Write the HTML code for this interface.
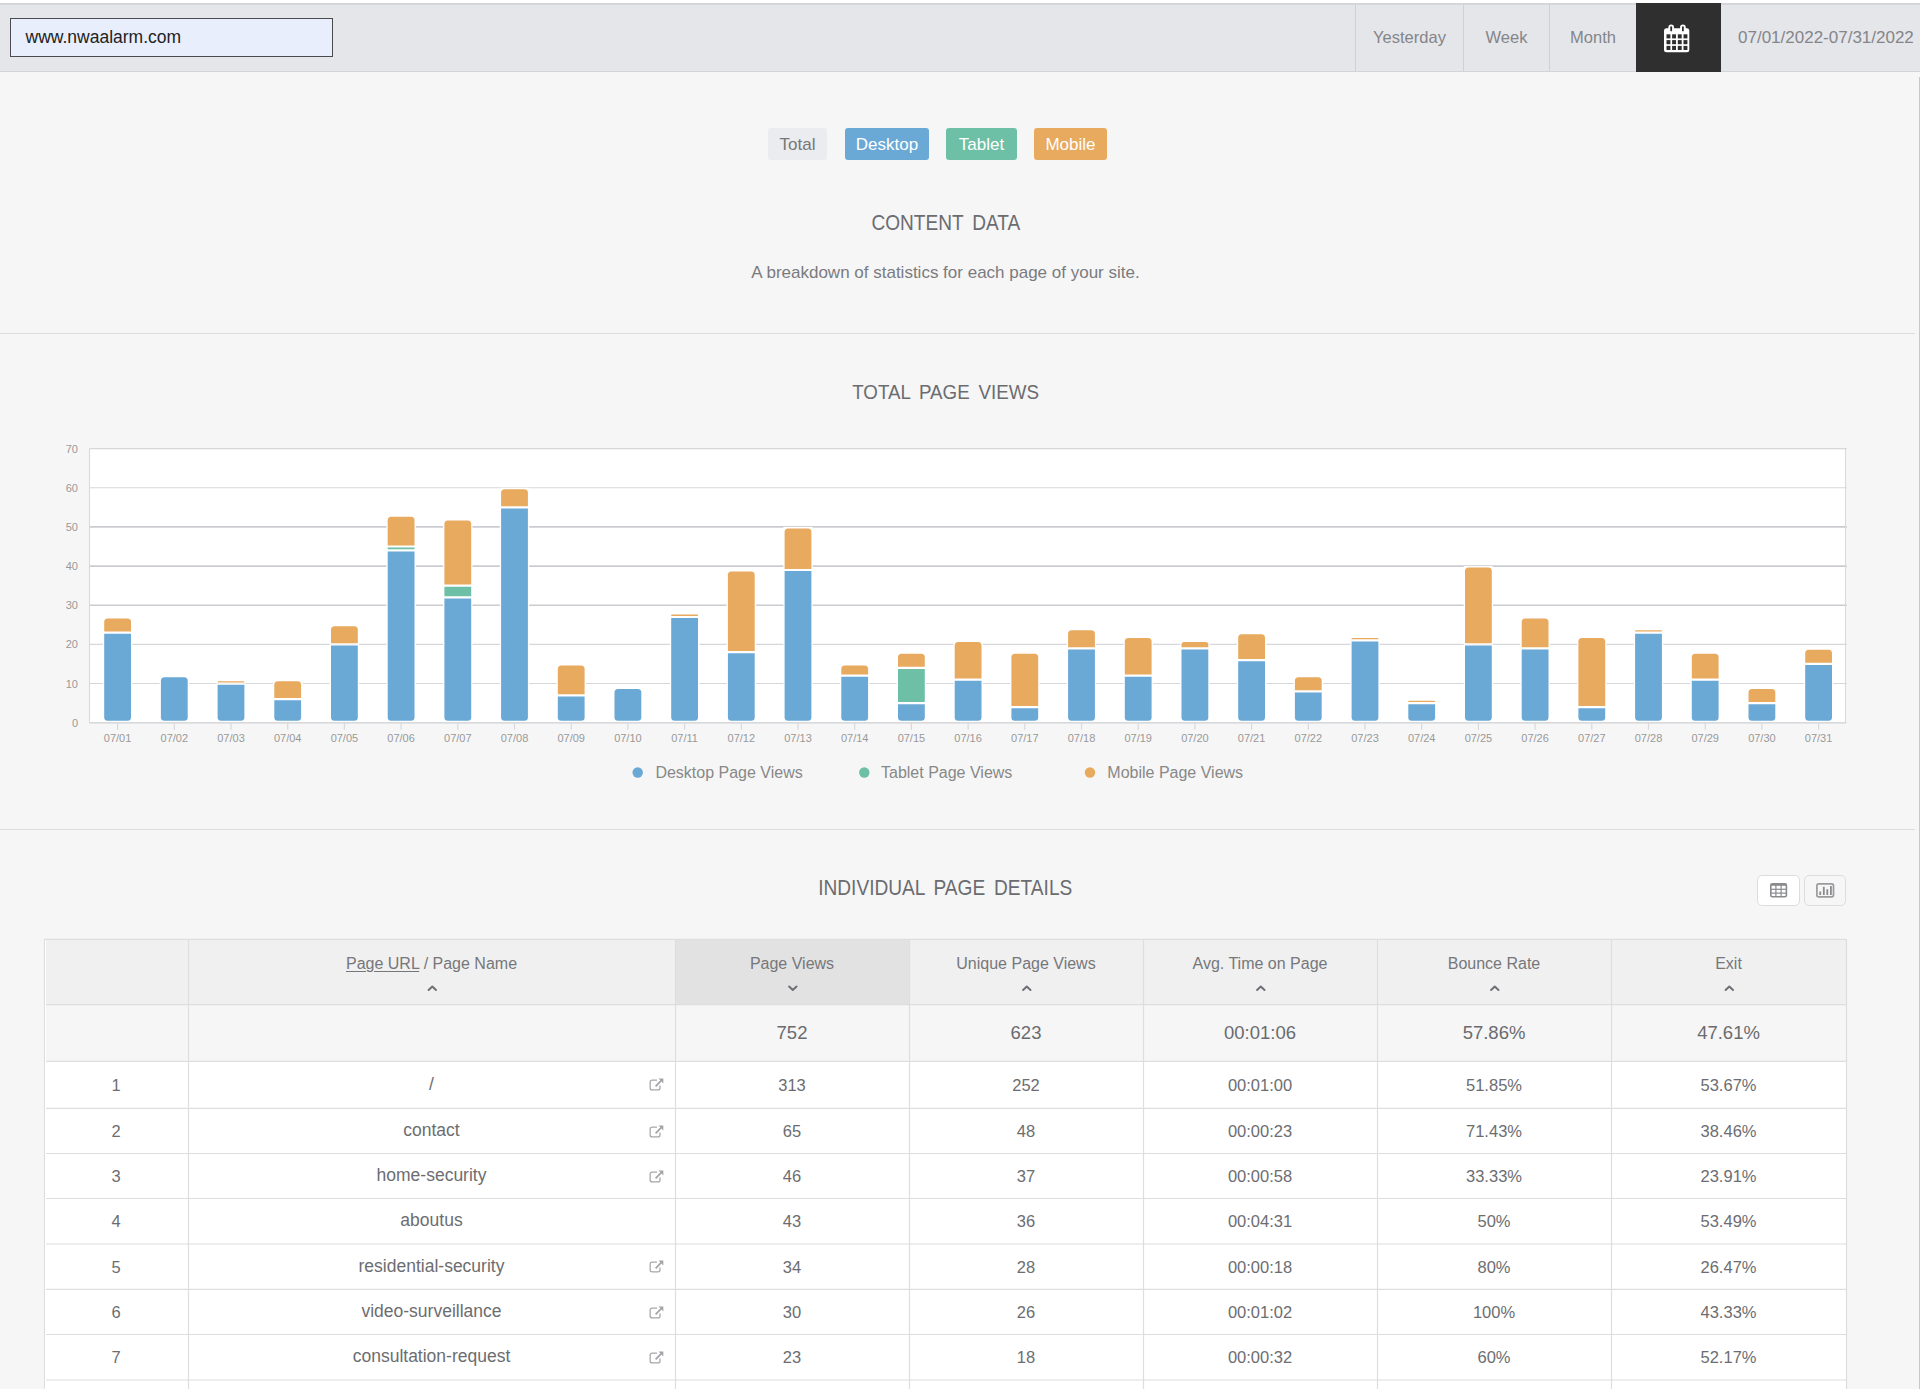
<!DOCTYPE html>
<html><head><meta charset="utf-8">
<style>
html,body{margin:0;padding:0}
body{width:1920px;height:1389px;overflow:hidden;position:relative;background:#f6f6f6;font-family:"Liberation Sans", sans-serif}
.a{position:absolute;white-space:nowrap;line-height:1}
.c{position:absolute;white-space:nowrap;line-height:1.2;text-align:center}
.btn{position:absolute;top:128px;height:32px;border-radius:3px;color:#fff;font-size:17px;line-height:34px;text-align:center}
</style></head><body>
<div style="position:absolute;left:0;top:0;width:1920px;height:3px;background:#fff"></div>
<div style="position:absolute;left:0;top:3px;width:1920px;height:69px;background:#e5e6ea;box-sizing:border-box;border-top:2px solid #d5d6da;border-bottom:1px solid #d3d4d8"></div>
<div style="position:absolute;left:10px;top:18px;width:323px;height:39px;box-sizing:border-box;border:1px solid #4a4b4f;background:#e8eefb"></div>
<div class="a" style="left:25.5px;top:29px;font-size:17.5px;color:#222">www.nwaalarm.com</div>
<div style="position:absolute;left:1355px;top:4px;width:1px;height:67px;background:#cfd0d4"></div>
<div style="position:absolute;left:1463px;top:4px;width:1px;height:67px;background:#cfd0d4"></div>
<div style="position:absolute;left:1549px;top:4px;width:1px;height:67px;background:#cfd0d4"></div>
<div class="c" style="left:1356px;width:107px;top:28px;font-size:16.5px;color:#848589">Yesterday</div>
<div class="c" style="left:1464px;width:85px;top:28px;font-size:16.5px;color:#848589">Week</div>
<div class="c" style="left:1550px;width:86px;top:28px;font-size:16.5px;color:#848589">Month</div>
<div style="position:absolute;left:1635.6px;top:3px;width:85px;height:69px;background:#2f2f2f"></div>
<svg width="26" height="29" viewBox="0 0 26 29" style="position:absolute;left:1663.6px;top:23.8px"><path d="M2.5,4.3 H22.8 Q25.3,4.3 25.3,6.8 V25.7 Q25.3,28.2 22.8,28.2 H2.5 Q0,28.2 0,25.7 V6.8 Q0,4.3 2.5,4.3 Z" fill="#fff"/><rect x="4.4" y="0.5" width="5.6" height="8" rx="2.8" fill="#fff"/><rect x="16.1" y="0.5" width="5.6" height="8" rx="2.8" fill="#fff"/><rect x="6.3" y="2.3" width="1.8" height="5" rx="0.9" fill="#2f2f2f"/><rect x="18" y="2.3" width="1.8" height="5" rx="0.9" fill="#2f2f2f"/><rect x="2.5" y="10.3" width="3.9" height="4.1" fill="#2f2f2f"/><rect x="8.1" y="10.3" width="3.9" height="4.1" fill="#2f2f2f"/><rect x="13.8" y="10.3" width="3.9" height="4.1" fill="#2f2f2f"/><rect x="19.5" y="10.3" width="3.9" height="4.1" fill="#2f2f2f"/><rect x="2.5" y="16.1" width="3.9" height="4.1" fill="#2f2f2f"/><rect x="8.1" y="16.1" width="3.9" height="4.1" fill="#2f2f2f"/><rect x="13.8" y="16.1" width="3.9" height="4.1" fill="#2f2f2f"/><rect x="19.5" y="16.1" width="3.9" height="4.1" fill="#2f2f2f"/><rect x="2.5" y="21.9" width="3.9" height="4.1" fill="#2f2f2f"/><rect x="8.1" y="21.9" width="3.9" height="4.1" fill="#2f2f2f"/><rect x="13.8" y="21.9" width="3.9" height="4.1" fill="#2f2f2f"/><rect x="19.5" y="21.9" width="3.9" height="4.1" fill="#2f2f2f"/></svg>
<div class="a" style="left:1738px;top:29px;font-size:17px;color:#848589">07/01/2022-07/31/2022</div>
<div style="position:absolute;left:1919px;top:77px;width:1px;height:1312px;background:#c8c8c8"></div>

<div class="btn" style="left:768px;width:59px;background:#ebecf0;color:#777">Total</div>
<div class="btn" style="left:845px;width:84px;background:#6aa8d6">Desktop</div>
<div class="btn" style="left:946px;width:71px;background:#6dc0a6">Tablet</div>
<div class="btn" style="left:1034px;width:73px;background:#e8aa5e">Mobile</div>

<div class="c" style="left:0;width:1891px;top:211px;font-size:21.5px;color:#6b6c70;word-spacing:4px"><span style="display:inline-block;transform:scaleX(0.887)">CONTENT DATA</span></div>
<div class="c" style="left:0;width:1891px;top:263px;font-size:17px;color:#7a7b7f">A breakdown of statistics for each page of your site.</div>
<div style="position:absolute;left:0;top:333px;width:1915px;height:1px;background:#dcdde1"></div>

<div class="c" style="left:0;width:1891px;top:379px;font-size:21px;color:#6b6c70;word-spacing:4px"><span style="display:inline-block;transform:scaleX(0.893)">TOTAL PAGE VIEWS</span></div>
<svg width="1920" height="1389" style="position:absolute;left:0;top:0">
<rect x="89.5" y="448.6" width="1756.0" height="274.1" fill="#fff"/>
<line x1="89.5" y1="722.70" x2="1846.8" y2="722.70" stroke="#d6d7db" stroke-width="1.1"/>
<line x1="89.5" y1="683.54" x2="1846.8" y2="683.54" stroke="#d6d7db" stroke-width="1.1"/>
<line x1="89.5" y1="644.39" x2="1846.8" y2="644.39" stroke="#d6d7db" stroke-width="1.1"/>
<line x1="89.5" y1="605.23" x2="1846.8" y2="605.23" stroke="#cbccd0" stroke-width="1.7"/>
<line x1="89.5" y1="566.07" x2="1846.8" y2="566.07" stroke="#cbccd0" stroke-width="1.7"/>
<line x1="89.5" y1="526.91" x2="1846.8" y2="526.91" stroke="#cbccd0" stroke-width="1.7"/>
<line x1="89.5" y1="487.76" x2="1846.8" y2="487.76" stroke="#d6d7db" stroke-width="1.1"/>
<line x1="89.5" y1="448.60" x2="1846.8" y2="448.60" stroke="#d6d7db" stroke-width="1.1"/>
<line x1="89.5" y1="448.6" x2="89.5" y2="722.7" stroke="#d9dadf" stroke-width="1.1"/>
<line x1="1845.5" y1="448.6" x2="1845.5" y2="722.7" stroke="#d9dadf" stroke-width="1.1"/>
<text x="78" y="726.70" text-anchor="end" font-family='"Liberation Sans", sans-serif' font-size="11" fill="#999">0</text>
<text x="78" y="687.54" text-anchor="end" font-family='"Liberation Sans", sans-serif' font-size="11" fill="#999">10</text>
<text x="78" y="648.39" text-anchor="end" font-family='"Liberation Sans", sans-serif' font-size="11" fill="#999">20</text>
<text x="78" y="609.23" text-anchor="end" font-family='"Liberation Sans", sans-serif' font-size="11" fill="#999">30</text>
<text x="78" y="570.07" text-anchor="end" font-family='"Liberation Sans", sans-serif' font-size="11" fill="#999">40</text>
<text x="78" y="530.91" text-anchor="end" font-family='"Liberation Sans", sans-serif' font-size="11" fill="#999">50</text>
<text x="78" y="491.76" text-anchor="end" font-family='"Liberation Sans", sans-serif' font-size="11" fill="#999">60</text>
<text x="78" y="452.60" text-anchor="end" font-family='"Liberation Sans", sans-serif' font-size="11" fill="#999">70</text>
<line x1="117.60" y1="722.7" x2="117.60" y2="729.7" stroke="#d8d9dd" stroke-width="1.2"/>
<text x="117.60" y="741.70" text-anchor="middle" font-family='"Liberation Sans", sans-serif' font-size="11" fill="#999">07/01</text>
<rect x="102.90" y="632.64" width="29.4" height="90.06" fill="#fff"/>
<path d="M104.20,633.74 H131.00 Q131.00,633.74 131.00,633.74 V717.30 Q131.00,720.80 127.50,720.80 H107.70 Q104.20,720.80 104.20,717.30 V633.74 Q104.20,633.74 104.20,633.74 Z" fill="#6aa8d6"/>
<rect x="102.90" y="616.98" width="29.4" height="15.66" fill="#fff"/>
<path d="M107.70,618.48 H127.50 Q131.00,618.48 131.00,621.98 V631.54 Q131.00,631.54 131.00,631.54 H104.20 Q104.20,631.54 104.20,631.54 V621.98 Q104.20,618.48 107.70,618.48 Z" fill="#e8aa5e"/>
<line x1="174.30" y1="722.7" x2="174.30" y2="729.7" stroke="#d8d9dd" stroke-width="1.2"/>
<text x="174.30" y="741.70" text-anchor="middle" font-family='"Liberation Sans", sans-serif' font-size="11" fill="#999">07/02</text>
<rect x="159.60" y="675.71" width="29.4" height="46.99" fill="#fff"/>
<path d="M164.40,677.21 H184.20 Q187.70,677.21 187.70,680.71 V717.30 Q187.70,720.80 184.20,720.80 H164.40 Q160.90,720.80 160.90,717.30 V680.71 Q160.90,677.21 164.40,677.21 Z" fill="#6aa8d6"/>
<line x1="231.00" y1="722.7" x2="231.00" y2="729.7" stroke="#d8d9dd" stroke-width="1.2"/>
<text x="231.00" y="741.70" text-anchor="middle" font-family='"Liberation Sans", sans-serif' font-size="11" fill="#999">07/03</text>
<rect x="216.30" y="683.54" width="29.4" height="39.16" fill="#fff"/>
<path d="M217.60,684.64 H244.40 Q244.40,684.64 244.40,684.64 V717.30 Q244.40,720.80 240.90,720.80 H221.10 Q217.60,720.80 217.60,717.30 V684.64 Q217.60,684.64 217.60,684.64 Z" fill="#6aa8d6"/>
<rect x="216.30" y="679.63" width="29.4" height="3.92" fill="#fff"/>
<path d="M218.26,681.13 H243.74 Q244.40,681.13 244.40,681.79 V682.44 Q244.40,682.44 244.40,682.44 H217.60 Q217.60,682.44 217.60,682.44 V681.79 Q217.60,681.13 218.26,681.13 Z" fill="#e8aa5e"/>
<line x1="287.70" y1="722.7" x2="287.70" y2="729.7" stroke="#d8d9dd" stroke-width="1.2"/>
<text x="287.70" y="741.70" text-anchor="middle" font-family='"Liberation Sans", sans-serif' font-size="11" fill="#999">07/04</text>
<rect x="273.00" y="699.21" width="29.4" height="23.49" fill="#fff"/>
<path d="M274.30,700.31 H301.10 Q301.10,700.31 301.10,700.31 V717.30 Q301.10,720.80 297.60,720.80 H277.80 Q274.30,720.80 274.30,717.30 V700.31 Q274.30,700.31 274.30,700.31 Z" fill="#6aa8d6"/>
<rect x="273.00" y="679.63" width="29.4" height="19.58" fill="#fff"/>
<path d="M277.80,681.13 H297.60 Q301.10,681.13 301.10,684.63 V698.11 Q301.10,698.11 301.10,698.11 H274.30 Q274.30,698.11 274.30,698.11 V684.63 Q274.30,681.13 277.80,681.13 Z" fill="#e8aa5e"/>
<line x1="344.40" y1="722.7" x2="344.40" y2="729.7" stroke="#d8d9dd" stroke-width="1.2"/>
<text x="344.40" y="741.70" text-anchor="middle" font-family='"Liberation Sans", sans-serif' font-size="11" fill="#999">07/05</text>
<rect x="329.70" y="644.39" width="29.4" height="78.31" fill="#fff"/>
<path d="M331.00,645.49 H357.80 Q357.80,645.49 357.80,645.49 V717.30 Q357.80,720.80 354.30,720.80 H334.50 Q331.00,720.80 331.00,717.30 V645.49 Q331.00,645.49 331.00,645.49 Z" fill="#6aa8d6"/>
<rect x="329.70" y="624.81" width="29.4" height="19.58" fill="#fff"/>
<path d="M334.50,626.31 H354.30 Q357.80,626.31 357.80,629.81 V643.29 Q357.80,643.29 357.80,643.29 H331.00 Q331.00,643.29 331.00,643.29 V629.81 Q331.00,626.31 334.50,626.31 Z" fill="#e8aa5e"/>
<line x1="401.10" y1="722.7" x2="401.10" y2="729.7" stroke="#d8d9dd" stroke-width="1.2"/>
<text x="401.10" y="741.70" text-anchor="middle" font-family='"Liberation Sans", sans-serif' font-size="11" fill="#999">07/06</text>
<rect x="386.40" y="550.41" width="29.4" height="172.29" fill="#fff"/>
<path d="M387.70,551.51 H414.50 Q414.50,551.51 414.50,551.51 V717.30 Q414.50,720.80 411.00,720.80 H391.20 Q387.70,720.80 387.70,717.30 V551.51 Q387.70,551.51 387.70,551.51 Z" fill="#6aa8d6"/>
<rect x="386.40" y="546.49" width="29.4" height="3.92" fill="#fff"/>
<path d="M387.70,547.59 H414.50 Q414.50,547.59 414.50,547.59 V549.31 Q414.50,549.31 414.50,549.31 H387.70 Q387.70,549.31 387.70,549.31 V547.59 Q387.70,547.59 387.70,547.59 Z" fill="#6dc0a6"/>
<rect x="386.40" y="515.17" width="29.4" height="31.33" fill="#fff"/>
<path d="M391.20,516.67 H411.00 Q414.50,516.67 414.50,520.17 V545.39 Q414.50,545.39 414.50,545.39 H387.70 Q387.70,545.39 387.70,545.39 V520.17 Q387.70,516.67 391.20,516.67 Z" fill="#e8aa5e"/>
<line x1="457.80" y1="722.7" x2="457.80" y2="729.7" stroke="#d8d9dd" stroke-width="1.2"/>
<text x="457.80" y="741.70" text-anchor="middle" font-family='"Liberation Sans", sans-serif' font-size="11" fill="#999">07/07</text>
<rect x="443.10" y="597.40" width="29.4" height="125.30" fill="#fff"/>
<path d="M444.40,598.50 H471.20 Q471.20,598.50 471.20,598.50 V717.30 Q471.20,720.80 467.70,720.80 H447.90 Q444.40,720.80 444.40,717.30 V598.50 Q444.40,598.50 444.40,598.50 Z" fill="#6aa8d6"/>
<rect x="443.10" y="585.65" width="29.4" height="11.75" fill="#fff"/>
<path d="M444.40,586.75 H471.20 Q471.20,586.75 471.20,586.75 V596.30 Q471.20,596.30 471.20,596.30 H444.40 Q444.40,596.30 444.40,596.30 V586.75 Q444.40,586.75 444.40,586.75 Z" fill="#6dc0a6"/>
<rect x="443.10" y="519.08" width="29.4" height="66.57" fill="#fff"/>
<path d="M447.90,520.58 H467.70 Q471.20,520.58 471.20,524.08 V584.55 Q471.20,584.55 471.20,584.55 H444.40 Q444.40,584.55 444.40,584.55 V524.08 Q444.40,520.58 447.90,520.58 Z" fill="#e8aa5e"/>
<line x1="514.50" y1="722.7" x2="514.50" y2="729.7" stroke="#d8d9dd" stroke-width="1.2"/>
<text x="514.50" y="741.70" text-anchor="middle" font-family='"Liberation Sans", sans-serif' font-size="11" fill="#999">07/08</text>
<rect x="499.80" y="507.34" width="29.4" height="215.36" fill="#fff"/>
<path d="M501.10,508.44 H527.90 Q527.90,508.44 527.90,508.44 V717.30 Q527.90,720.80 524.40,720.80 H504.60 Q501.10,720.80 501.10,717.30 V508.44 Q501.10,508.44 501.10,508.44 Z" fill="#6aa8d6"/>
<rect x="499.80" y="487.76" width="29.4" height="19.58" fill="#fff"/>
<path d="M504.60,489.26 H524.40 Q527.90,489.26 527.90,492.76 V506.24 Q527.90,506.24 527.90,506.24 H501.10 Q501.10,506.24 501.10,506.24 V492.76 Q501.10,489.26 504.60,489.26 Z" fill="#e8aa5e"/>
<line x1="571.20" y1="722.7" x2="571.20" y2="729.7" stroke="#d8d9dd" stroke-width="1.2"/>
<text x="571.20" y="741.70" text-anchor="middle" font-family='"Liberation Sans", sans-serif' font-size="11" fill="#999">07/09</text>
<rect x="556.50" y="695.29" width="29.4" height="27.41" fill="#fff"/>
<path d="M557.80,696.39 H584.60 Q584.60,696.39 584.60,696.39 V717.30 Q584.60,720.80 581.10,720.80 H561.30 Q557.80,720.80 557.80,717.30 V696.39 Q557.80,696.39 557.80,696.39 Z" fill="#6aa8d6"/>
<rect x="556.50" y="663.96" width="29.4" height="31.33" fill="#fff"/>
<path d="M561.30,665.46 H581.10 Q584.60,665.46 584.60,668.96 V694.19 Q584.60,694.19 584.60,694.19 H557.80 Q557.80,694.19 557.80,694.19 V668.96 Q557.80,665.46 561.30,665.46 Z" fill="#e8aa5e"/>
<line x1="627.90" y1="722.7" x2="627.90" y2="729.7" stroke="#d8d9dd" stroke-width="1.2"/>
<text x="627.90" y="741.70" text-anchor="middle" font-family='"Liberation Sans", sans-serif' font-size="11" fill="#999">07/10</text>
<rect x="613.20" y="687.46" width="29.4" height="35.24" fill="#fff"/>
<path d="M618.00,688.96 H637.80 Q641.30,688.96 641.30,692.46 V717.30 Q641.30,720.80 637.80,720.80 H618.00 Q614.50,720.80 614.50,717.30 V692.46 Q614.50,688.96 618.00,688.96 Z" fill="#6aa8d6"/>
<line x1="684.60" y1="722.7" x2="684.60" y2="729.7" stroke="#d8d9dd" stroke-width="1.2"/>
<text x="684.60" y="741.70" text-anchor="middle" font-family='"Liberation Sans", sans-serif' font-size="11" fill="#999">07/11</text>
<rect x="669.90" y="616.98" width="29.4" height="105.72" fill="#fff"/>
<path d="M671.20,618.08 H698.00 Q698.00,618.08 698.00,618.08 V717.30 Q698.00,720.80 694.50,720.80 H674.70 Q671.20,720.80 671.20,717.30 V618.08 Q671.20,618.08 671.20,618.08 Z" fill="#6aa8d6"/>
<rect x="669.90" y="613.06" width="29.4" height="3.92" fill="#fff"/>
<path d="M671.86,614.56 H697.34 Q698.00,614.56 698.00,615.22 V615.88 Q698.00,615.88 698.00,615.88 H671.20 Q671.20,615.88 671.20,615.88 V615.22 Q671.20,614.56 671.86,614.56 Z" fill="#e8aa5e"/>
<line x1="741.30" y1="722.7" x2="741.30" y2="729.7" stroke="#d8d9dd" stroke-width="1.2"/>
<text x="741.30" y="741.70" text-anchor="middle" font-family='"Liberation Sans", sans-serif' font-size="11" fill="#999">07/12</text>
<rect x="726.60" y="652.22" width="29.4" height="70.48" fill="#fff"/>
<path d="M727.90,653.32 H754.70 Q754.70,653.32 754.70,653.32 V717.30 Q754.70,720.80 751.20,720.80 H731.40 Q727.90,720.80 727.90,717.30 V653.32 Q727.90,653.32 727.90,653.32 Z" fill="#6aa8d6"/>
<rect x="726.60" y="569.99" width="29.4" height="82.23" fill="#fff"/>
<path d="M731.40,571.49 H751.20 Q754.70,571.49 754.70,574.99 V651.12 Q754.70,651.12 754.70,651.12 H727.90 Q727.90,651.12 727.90,651.12 V574.99 Q727.90,571.49 731.40,571.49 Z" fill="#e8aa5e"/>
<line x1="798.00" y1="722.7" x2="798.00" y2="729.7" stroke="#d8d9dd" stroke-width="1.2"/>
<text x="798.00" y="741.70" text-anchor="middle" font-family='"Liberation Sans", sans-serif' font-size="11" fill="#999">07/13</text>
<rect x="783.30" y="569.99" width="29.4" height="152.71" fill="#fff"/>
<path d="M784.60,571.09 H811.40 Q811.40,571.09 811.40,571.09 V717.30 Q811.40,720.80 807.90,720.80 H788.10 Q784.60,720.80 784.60,717.30 V571.09 Q784.60,571.09 784.60,571.09 Z" fill="#6aa8d6"/>
<rect x="783.30" y="526.91" width="29.4" height="43.07" fill="#fff"/>
<path d="M788.10,528.41 H807.90 Q811.40,528.41 811.40,531.91 V568.89 Q811.40,568.89 811.40,568.89 H784.60 Q784.60,568.89 784.60,568.89 V531.91 Q784.60,528.41 788.10,528.41 Z" fill="#e8aa5e"/>
<line x1="854.70" y1="722.7" x2="854.70" y2="729.7" stroke="#d8d9dd" stroke-width="1.2"/>
<text x="854.70" y="741.70" text-anchor="middle" font-family='"Liberation Sans", sans-serif' font-size="11" fill="#999">07/14</text>
<rect x="840.00" y="675.71" width="29.4" height="46.99" fill="#fff"/>
<path d="M841.30,676.81 H868.10 Q868.10,676.81 868.10,676.81 V717.30 Q868.10,720.80 864.60,720.80 H844.80 Q841.30,720.80 841.30,717.30 V676.81 Q841.30,676.81 841.30,676.81 Z" fill="#6aa8d6"/>
<rect x="840.00" y="663.96" width="29.4" height="11.75" fill="#fff"/>
<path d="M844.80,665.46 H864.60 Q868.10,665.46 868.10,668.96 V674.61 Q868.10,674.61 868.10,674.61 H841.30 Q841.30,674.61 841.30,674.61 V668.96 Q841.30,665.46 844.80,665.46 Z" fill="#e8aa5e"/>
<line x1="911.40" y1="722.7" x2="911.40" y2="729.7" stroke="#d8d9dd" stroke-width="1.2"/>
<text x="911.40" y="741.70" text-anchor="middle" font-family='"Liberation Sans", sans-serif' font-size="11" fill="#999">07/15</text>
<rect x="896.70" y="703.12" width="29.4" height="19.58" fill="#fff"/>
<path d="M898.00,704.22 H924.80 Q924.80,704.22 924.80,704.22 V717.30 Q924.80,720.80 921.30,720.80 H901.50 Q898.00,720.80 898.00,717.30 V704.22 Q898.00,704.22 898.00,704.22 Z" fill="#6aa8d6"/>
<rect x="896.70" y="667.88" width="29.4" height="35.24" fill="#fff"/>
<path d="M898.00,668.98 H924.80 Q924.80,668.98 924.80,668.98 V702.02 Q924.80,702.02 924.80,702.02 H898.00 Q898.00,702.02 898.00,702.02 V668.98 Q898.00,668.98 898.00,668.98 Z" fill="#6dc0a6"/>
<rect x="896.70" y="652.22" width="29.4" height="15.66" fill="#fff"/>
<path d="M901.50,653.72 H921.30 Q924.80,653.72 924.80,657.22 V666.78 Q924.80,666.78 924.80,666.78 H898.00 Q898.00,666.78 898.00,666.78 V657.22 Q898.00,653.72 901.50,653.72 Z" fill="#e8aa5e"/>
<line x1="968.10" y1="722.7" x2="968.10" y2="729.7" stroke="#d8d9dd" stroke-width="1.2"/>
<text x="968.10" y="741.70" text-anchor="middle" font-family='"Liberation Sans", sans-serif' font-size="11" fill="#999">07/16</text>
<rect x="953.40" y="679.63" width="29.4" height="43.07" fill="#fff"/>
<path d="M954.70,680.73 H981.50 Q981.50,680.73 981.50,680.73 V717.30 Q981.50,720.80 978.00,720.80 H958.20 Q954.70,720.80 954.70,717.30 V680.73 Q954.70,680.73 954.70,680.73 Z" fill="#6aa8d6"/>
<rect x="953.40" y="640.47" width="29.4" height="39.16" fill="#fff"/>
<path d="M958.20,641.97 H978.00 Q981.50,641.97 981.50,645.47 V678.53 Q981.50,678.53 981.50,678.53 H954.70 Q954.70,678.53 954.70,678.53 V645.47 Q954.70,641.97 958.20,641.97 Z" fill="#e8aa5e"/>
<line x1="1024.80" y1="722.7" x2="1024.80" y2="729.7" stroke="#d8d9dd" stroke-width="1.2"/>
<text x="1024.80" y="741.70" text-anchor="middle" font-family='"Liberation Sans", sans-serif' font-size="11" fill="#999">07/17</text>
<rect x="1010.10" y="707.04" width="29.4" height="15.66" fill="#fff"/>
<path d="M1011.40,708.14 H1038.20 Q1038.20,708.14 1038.20,708.14 V717.30 Q1038.20,720.80 1034.70,720.80 H1014.90 Q1011.40,720.80 1011.40,717.30 V708.14 Q1011.40,708.14 1011.40,708.14 Z" fill="#6aa8d6"/>
<rect x="1010.10" y="652.22" width="29.4" height="54.82" fill="#fff"/>
<path d="M1014.90,653.72 H1034.70 Q1038.20,653.72 1038.20,657.22 V705.94 Q1038.20,705.94 1038.20,705.94 H1011.40 Q1011.40,705.94 1011.40,705.94 V657.22 Q1011.40,653.72 1014.90,653.72 Z" fill="#e8aa5e"/>
<line x1="1081.50" y1="722.7" x2="1081.50" y2="729.7" stroke="#d8d9dd" stroke-width="1.2"/>
<text x="1081.50" y="741.70" text-anchor="middle" font-family='"Liberation Sans", sans-serif' font-size="11" fill="#999">07/18</text>
<rect x="1066.80" y="648.30" width="29.4" height="74.40" fill="#fff"/>
<path d="M1068.10,649.40 H1094.90 Q1094.90,649.40 1094.90,649.40 V717.30 Q1094.90,720.80 1091.40,720.80 H1071.60 Q1068.10,720.80 1068.10,717.30 V649.40 Q1068.10,649.40 1068.10,649.40 Z" fill="#6aa8d6"/>
<rect x="1066.80" y="628.72" width="29.4" height="19.58" fill="#fff"/>
<path d="M1071.60,630.22 H1091.40 Q1094.90,630.22 1094.90,633.72 V647.20 Q1094.90,647.20 1094.90,647.20 H1068.10 Q1068.10,647.20 1068.10,647.20 V633.72 Q1068.10,630.22 1071.60,630.22 Z" fill="#e8aa5e"/>
<line x1="1138.20" y1="722.7" x2="1138.20" y2="729.7" stroke="#d8d9dd" stroke-width="1.2"/>
<text x="1138.20" y="741.70" text-anchor="middle" font-family='"Liberation Sans", sans-serif' font-size="11" fill="#999">07/19</text>
<rect x="1123.50" y="675.71" width="29.4" height="46.99" fill="#fff"/>
<path d="M1124.80,676.81 H1151.60 Q1151.60,676.81 1151.60,676.81 V717.30 Q1151.60,720.80 1148.10,720.80 H1128.30 Q1124.80,720.80 1124.80,717.30 V676.81 Q1124.80,676.81 1124.80,676.81 Z" fill="#6aa8d6"/>
<rect x="1123.50" y="636.55" width="29.4" height="39.16" fill="#fff"/>
<path d="M1128.30,638.05 H1148.10 Q1151.60,638.05 1151.60,641.55 V674.61 Q1151.60,674.61 1151.60,674.61 H1124.80 Q1124.80,674.61 1124.80,674.61 V641.55 Q1124.80,638.05 1128.30,638.05 Z" fill="#e8aa5e"/>
<line x1="1194.90" y1="722.7" x2="1194.90" y2="729.7" stroke="#d8d9dd" stroke-width="1.2"/>
<text x="1194.90" y="741.70" text-anchor="middle" font-family='"Liberation Sans", sans-serif' font-size="11" fill="#999">07/20</text>
<rect x="1180.20" y="648.30" width="29.4" height="74.40" fill="#fff"/>
<path d="M1181.50,649.40 H1208.30 Q1208.30,649.40 1208.30,649.40 V717.30 Q1208.30,720.80 1204.80,720.80 H1185.00 Q1181.50,720.80 1181.50,717.30 V649.40 Q1181.50,649.40 1181.50,649.40 Z" fill="#6aa8d6"/>
<rect x="1180.20" y="640.47" width="29.4" height="7.83" fill="#fff"/>
<path d="M1184.12,641.97 H1205.68 Q1208.30,641.97 1208.30,644.59 V647.20 Q1208.30,647.20 1208.30,647.20 H1181.50 Q1181.50,647.20 1181.50,647.20 V644.59 Q1181.50,641.97 1184.12,641.97 Z" fill="#e8aa5e"/>
<line x1="1251.60" y1="722.7" x2="1251.60" y2="729.7" stroke="#d8d9dd" stroke-width="1.2"/>
<text x="1251.60" y="741.70" text-anchor="middle" font-family='"Liberation Sans", sans-serif' font-size="11" fill="#999">07/21</text>
<rect x="1236.90" y="660.05" width="29.4" height="62.65" fill="#fff"/>
<path d="M1238.20,661.15 H1265.00 Q1265.00,661.15 1265.00,661.15 V717.30 Q1265.00,720.80 1261.50,720.80 H1241.70 Q1238.20,720.80 1238.20,717.30 V661.15 Q1238.20,661.15 1238.20,661.15 Z" fill="#6aa8d6"/>
<rect x="1236.90" y="632.64" width="29.4" height="27.41" fill="#fff"/>
<path d="M1241.70,634.14 H1261.50 Q1265.00,634.14 1265.00,637.64 V658.95 Q1265.00,658.95 1265.00,658.95 H1238.20 Q1238.20,658.95 1238.20,658.95 V637.64 Q1238.20,634.14 1241.70,634.14 Z" fill="#e8aa5e"/>
<line x1="1308.30" y1="722.7" x2="1308.30" y2="729.7" stroke="#d8d9dd" stroke-width="1.2"/>
<text x="1308.30" y="741.70" text-anchor="middle" font-family='"Liberation Sans", sans-serif' font-size="11" fill="#999">07/22</text>
<rect x="1293.60" y="691.37" width="29.4" height="31.33" fill="#fff"/>
<path d="M1294.90,692.47 H1321.70 Q1321.70,692.47 1321.70,692.47 V717.30 Q1321.70,720.80 1318.20,720.80 H1298.40 Q1294.90,720.80 1294.90,717.30 V692.47 Q1294.90,692.47 1294.90,692.47 Z" fill="#6aa8d6"/>
<rect x="1293.60" y="675.71" width="29.4" height="15.66" fill="#fff"/>
<path d="M1298.40,677.21 H1318.20 Q1321.70,677.21 1321.70,680.71 V690.27 Q1321.70,690.27 1321.70,690.27 H1294.90 Q1294.90,690.27 1294.90,690.27 V680.71 Q1294.90,677.21 1298.40,677.21 Z" fill="#e8aa5e"/>
<line x1="1365.00" y1="722.7" x2="1365.00" y2="729.7" stroke="#d8d9dd" stroke-width="1.2"/>
<text x="1365.00" y="741.70" text-anchor="middle" font-family='"Liberation Sans", sans-serif' font-size="11" fill="#999">07/23</text>
<rect x="1350.30" y="640.47" width="29.4" height="82.23" fill="#fff"/>
<path d="M1351.60,641.57 H1378.40 Q1378.40,641.57 1378.40,641.57 V717.30 Q1378.40,720.80 1374.90,720.80 H1355.10 Q1351.60,720.80 1351.60,717.30 V641.57 Q1351.60,641.57 1351.60,641.57 Z" fill="#6aa8d6"/>
<rect x="1350.30" y="636.55" width="29.4" height="3.92" fill="#fff"/>
<path d="M1352.26,638.05 H1377.74 Q1378.40,638.05 1378.40,638.71 V639.37 Q1378.40,639.37 1378.40,639.37 H1351.60 Q1351.60,639.37 1351.60,639.37 V638.71 Q1351.60,638.05 1352.26,638.05 Z" fill="#e8aa5e"/>
<line x1="1421.70" y1="722.7" x2="1421.70" y2="729.7" stroke="#d8d9dd" stroke-width="1.2"/>
<text x="1421.70" y="741.70" text-anchor="middle" font-family='"Liberation Sans", sans-serif' font-size="11" fill="#999">07/24</text>
<rect x="1407.00" y="703.12" width="29.4" height="19.58" fill="#fff"/>
<path d="M1408.30,704.22 H1435.10 Q1435.10,704.22 1435.10,704.22 V717.30 Q1435.10,720.80 1431.60,720.80 H1411.80 Q1408.30,720.80 1408.30,717.30 V704.22 Q1408.30,704.22 1408.30,704.22 Z" fill="#6aa8d6"/>
<rect x="1407.00" y="699.21" width="29.4" height="3.92" fill="#fff"/>
<path d="M1408.96,700.71 H1434.44 Q1435.10,700.71 1435.10,701.36 V702.02 Q1435.10,702.02 1435.10,702.02 H1408.30 Q1408.30,702.02 1408.30,702.02 V701.36 Q1408.30,700.71 1408.96,700.71 Z" fill="#e8aa5e"/>
<line x1="1478.40" y1="722.7" x2="1478.40" y2="729.7" stroke="#d8d9dd" stroke-width="1.2"/>
<text x="1478.40" y="741.70" text-anchor="middle" font-family='"Liberation Sans", sans-serif' font-size="11" fill="#999">07/25</text>
<rect x="1463.70" y="644.39" width="29.4" height="78.31" fill="#fff"/>
<path d="M1465.00,645.49 H1491.80 Q1491.80,645.49 1491.80,645.49 V717.30 Q1491.80,720.80 1488.30,720.80 H1468.50 Q1465.00,720.80 1465.00,717.30 V645.49 Q1465.00,645.49 1465.00,645.49 Z" fill="#6aa8d6"/>
<rect x="1463.70" y="566.07" width="29.4" height="78.31" fill="#fff"/>
<path d="M1468.50,567.57 H1488.30 Q1491.80,567.57 1491.80,571.07 V643.29 Q1491.80,643.29 1491.80,643.29 H1465.00 Q1465.00,643.29 1465.00,643.29 V571.07 Q1465.00,567.57 1468.50,567.57 Z" fill="#e8aa5e"/>
<line x1="1535.10" y1="722.7" x2="1535.10" y2="729.7" stroke="#d8d9dd" stroke-width="1.2"/>
<text x="1535.10" y="741.70" text-anchor="middle" font-family='"Liberation Sans", sans-serif' font-size="11" fill="#999">07/26</text>
<rect x="1520.40" y="648.30" width="29.4" height="74.40" fill="#fff"/>
<path d="M1521.70,649.40 H1548.50 Q1548.50,649.40 1548.50,649.40 V717.30 Q1548.50,720.80 1545.00,720.80 H1525.20 Q1521.70,720.80 1521.70,717.30 V649.40 Q1521.70,649.40 1521.70,649.40 Z" fill="#6aa8d6"/>
<rect x="1520.40" y="616.98" width="29.4" height="31.33" fill="#fff"/>
<path d="M1525.20,618.48 H1545.00 Q1548.50,618.48 1548.50,621.98 V647.20 Q1548.50,647.20 1548.50,647.20 H1521.70 Q1521.70,647.20 1521.70,647.20 V621.98 Q1521.70,618.48 1525.20,618.48 Z" fill="#e8aa5e"/>
<line x1="1591.80" y1="722.7" x2="1591.80" y2="729.7" stroke="#d8d9dd" stroke-width="1.2"/>
<text x="1591.80" y="741.70" text-anchor="middle" font-family='"Liberation Sans", sans-serif' font-size="11" fill="#999">07/27</text>
<rect x="1577.10" y="707.04" width="29.4" height="15.66" fill="#fff"/>
<path d="M1578.40,708.14 H1605.20 Q1605.20,708.14 1605.20,708.14 V717.30 Q1605.20,720.80 1601.70,720.80 H1581.90 Q1578.40,720.80 1578.40,717.30 V708.14 Q1578.40,708.14 1578.40,708.14 Z" fill="#6aa8d6"/>
<rect x="1577.10" y="636.55" width="29.4" height="70.48" fill="#fff"/>
<path d="M1581.90,638.05 H1601.70 Q1605.20,638.05 1605.20,641.55 V705.94 Q1605.20,705.94 1605.20,705.94 H1578.40 Q1578.40,705.94 1578.40,705.94 V641.55 Q1578.40,638.05 1581.90,638.05 Z" fill="#e8aa5e"/>
<line x1="1648.50" y1="722.7" x2="1648.50" y2="729.7" stroke="#d8d9dd" stroke-width="1.2"/>
<text x="1648.50" y="741.70" text-anchor="middle" font-family='"Liberation Sans", sans-serif' font-size="11" fill="#999">07/28</text>
<rect x="1633.80" y="632.64" width="29.4" height="90.06" fill="#fff"/>
<path d="M1635.10,633.74 H1661.90 Q1661.90,633.74 1661.90,633.74 V717.30 Q1661.90,720.80 1658.40,720.80 H1638.60 Q1635.10,720.80 1635.10,717.30 V633.74 Q1635.10,633.74 1635.10,633.74 Z" fill="#6aa8d6"/>
<rect x="1633.80" y="628.72" width="29.4" height="3.92" fill="#fff"/>
<path d="M1635.76,630.22 H1661.24 Q1661.90,630.22 1661.90,630.88 V631.54 Q1661.90,631.54 1661.90,631.54 H1635.10 Q1635.10,631.54 1635.10,631.54 V630.88 Q1635.10,630.22 1635.76,630.22 Z" fill="#e8aa5e"/>
<line x1="1705.20" y1="722.7" x2="1705.20" y2="729.7" stroke="#d8d9dd" stroke-width="1.2"/>
<text x="1705.20" y="741.70" text-anchor="middle" font-family='"Liberation Sans", sans-serif' font-size="11" fill="#999">07/29</text>
<rect x="1690.50" y="679.63" width="29.4" height="43.07" fill="#fff"/>
<path d="M1691.80,680.73 H1718.60 Q1718.60,680.73 1718.60,680.73 V717.30 Q1718.60,720.80 1715.10,720.80 H1695.30 Q1691.80,720.80 1691.80,717.30 V680.73 Q1691.80,680.73 1691.80,680.73 Z" fill="#6aa8d6"/>
<rect x="1690.50" y="652.22" width="29.4" height="27.41" fill="#fff"/>
<path d="M1695.30,653.72 H1715.10 Q1718.60,653.72 1718.60,657.22 V678.53 Q1718.60,678.53 1718.60,678.53 H1691.80 Q1691.80,678.53 1691.80,678.53 V657.22 Q1691.80,653.72 1695.30,653.72 Z" fill="#e8aa5e"/>
<line x1="1761.90" y1="722.7" x2="1761.90" y2="729.7" stroke="#d8d9dd" stroke-width="1.2"/>
<text x="1761.90" y="741.70" text-anchor="middle" font-family='"Liberation Sans", sans-serif' font-size="11" fill="#999">07/30</text>
<rect x="1747.20" y="703.12" width="29.4" height="19.58" fill="#fff"/>
<path d="M1748.50,704.22 H1775.30 Q1775.30,704.22 1775.30,704.22 V717.30 Q1775.30,720.80 1771.80,720.80 H1752.00 Q1748.50,720.80 1748.50,717.30 V704.22 Q1748.50,704.22 1748.50,704.22 Z" fill="#6aa8d6"/>
<rect x="1747.20" y="687.46" width="29.4" height="15.66" fill="#fff"/>
<path d="M1752.00,688.96 H1771.80 Q1775.30,688.96 1775.30,692.46 V702.02 Q1775.30,702.02 1775.30,702.02 H1748.50 Q1748.50,702.02 1748.50,702.02 V692.46 Q1748.50,688.96 1752.00,688.96 Z" fill="#e8aa5e"/>
<line x1="1818.60" y1="722.7" x2="1818.60" y2="729.7" stroke="#d8d9dd" stroke-width="1.2"/>
<text x="1818.60" y="741.70" text-anchor="middle" font-family='"Liberation Sans", sans-serif' font-size="11" fill="#999">07/31</text>
<rect x="1803.90" y="663.96" width="29.4" height="58.74" fill="#fff"/>
<path d="M1805.20,665.06 H1832.00 Q1832.00,665.06 1832.00,665.06 V717.30 Q1832.00,720.80 1828.50,720.80 H1808.70 Q1805.20,720.80 1805.20,717.30 V665.06 Q1805.20,665.06 1805.20,665.06 Z" fill="#6aa8d6"/>
<rect x="1803.90" y="648.30" width="29.4" height="15.66" fill="#fff"/>
<path d="M1808.70,649.80 H1828.50 Q1832.00,649.80 1832.00,653.30 V662.86 Q1832.00,662.86 1832.00,662.86 H1805.20 Q1805.20,662.86 1805.20,662.86 V653.30 Q1805.20,649.80 1808.70,649.80 Z" fill="#e8aa5e"/>
<line x1="89.5" y1="722.7" x2="1845.5" y2="722.7" stroke="#d8d9dd" stroke-width="1.5"/>
<circle cx="637.7" cy="772.5" r="5.2" fill="#6aa8d6"/>
<text x="655.4" y="778.4" font-family='"Liberation Sans", sans-serif' font-size="16" fill="#888">Desktop Page Views</text>
<circle cx="864.3" cy="772.5" r="5.2" fill="#6dc0a6"/>
<text x="881" y="778.4" font-family='"Liberation Sans", sans-serif' font-size="16" fill="#888">Tablet Page Views</text>
<circle cx="1090" cy="772.5" r="5.2" fill="#e8aa5e"/>
<text x="1107.3" y="778.4" font-family='"Liberation Sans", sans-serif' font-size="16" fill="#888">Mobile Page Views</text>
</svg>
<div style="position:absolute;left:0;top:829px;width:1915px;height:1px;background:#dcdde1"></div>

<div class="c" style="left:0;width:1891px;top:874.5px;font-size:22px;color:#6b6c70;word-spacing:4px"><span style="display:inline-block;transform:scaleX(0.869)">INDIVIDUAL PAGE DETAILS</span></div>
<div style="position:absolute;left:1757.4px;top:874.6px;width:42.3px;height:31px;box-sizing:border-box;border:1.2px solid #dcdde1;border-radius:5px;background:#fff"></div>
<div style="position:absolute;left:1804.2px;top:874.6px;width:42.3px;height:31px;box-sizing:border-box;border:1.2px solid #dcdde1;border-radius:5px;background:#f6f6f6"></div>
<svg width="18" height="15" viewBox="0 0 18 15" style="position:absolute;left:1769.8px;top:882.5px"><rect x="0.8" y="0.8" width="15.6" height="13" rx="1.6" fill="none" stroke="#8a8b8f" stroke-width="1.6"/><rect x="0.8" y="0.8" width="15.6" height="2" fill="#8a8b8f"/><line x1="0.8" y1="6.3" x2="16.4" y2="6.3" stroke="#8a8b8f" stroke-width="1.2"/><line x1="0.8" y1="10.1" x2="16.4" y2="10.1" stroke="#8a8b8f" stroke-width="1.2"/><line x1="5.9" y1="0.8" x2="5.9" y2="13.8" stroke="#8a8b8f" stroke-width="1.2"/><line x1="11.1" y1="0.8" x2="11.1" y2="13.8" stroke="#8a8b8f" stroke-width="1.2"/></svg>
<svg width="19" height="15" viewBox="0 0 19 15" style="position:absolute;left:1816.2px;top:883px"><rect x="0.9" y="0.9" width="16.6" height="13" rx="1.8" fill="none" stroke="#9a9b9f" stroke-width="1.7"/><rect x="3.3" y="8.5" width="1.8" height="3.5" fill="#8a8b8f"/><rect x="6.9" y="3.8" width="1.8" height="8.2" fill="#8a8b8f"/><rect x="10.4" y="6.3" width="1.8" height="5.7" fill="#8a8b8f"/><rect x="14" y="3" width="1.8" height="9" fill="#8a8b8f"/></svg>
<div style="position:absolute;left:44px;top:939.4px;width:1802px;height:65.20000000000005px;background:#f0f0f0"></div>
<div style="position:absolute;left:675px;top:939.4px;width:234px;height:65.20000000000005px;background:#e2e2e2"></div>
<div style="position:absolute;left:44px;top:1061.4px;width:1802px;height:327.5999999999999px;background:#fff"></div>
<svg width="1920" height="1389" style="position:absolute;left:0;top:0">
<line x1="44" y1="939.4" x2="1846.5" y2="939.4" stroke="#dedede" stroke-width="1.2"/>
<line x1="46" y1="1004.6" x2="1846.5" y2="1004.6" stroke="#dedede" stroke-width="1.2"/>
<line x1="46" y1="1061.4" x2="1846.5" y2="1061.4" stroke="#dedede" stroke-width="1.2"/>
<line x1="46" y1="1108.4" x2="1846.5" y2="1108.4" stroke="#dedede" stroke-width="1.2"/>
<line x1="46" y1="1153.5" x2="1846.5" y2="1153.5" stroke="#dedede" stroke-width="1.2"/>
<line x1="46" y1="1198.5" x2="1846.5" y2="1198.5" stroke="#dedede" stroke-width="1.2"/>
<line x1="46" y1="1244" x2="1846.5" y2="1244" stroke="#dedede" stroke-width="1.2"/>
<line x1="46" y1="1289.4" x2="1846.5" y2="1289.4" stroke="#dedede" stroke-width="1.2"/>
<line x1="46" y1="1334.5" x2="1846.5" y2="1334.5" stroke="#dedede" stroke-width="1.2"/>
<line x1="46" y1="1380" x2="1846.5" y2="1380" stroke="#dedede" stroke-width="1.2"/>
<line x1="44.5" y1="939.4" x2="44.5" y2="1389" stroke="#dedede" stroke-width="1.2"/>
<line x1="188.5" y1="939.4" x2="188.5" y2="1389" stroke="#dedede" stroke-width="1.2"/>
<line x1="675.5" y1="939.4" x2="675.5" y2="1389" stroke="#dedede" stroke-width="1.2"/>
<line x1="909.5" y1="939.4" x2="909.5" y2="1389" stroke="#dedede" stroke-width="1.2"/>
<line x1="1143.5" y1="939.4" x2="1143.5" y2="1389" stroke="#dedede" stroke-width="1.2"/>
<line x1="1377.5" y1="939.4" x2="1377.5" y2="1389" stroke="#dedede" stroke-width="1.2"/>
<line x1="1611.5" y1="939.4" x2="1611.5" y2="1389" stroke="#dedede" stroke-width="1.2"/>
<line x1="1846.5" y1="939.4" x2="1846.5" y2="1389" stroke="#dedede" stroke-width="1.2"/>
<path d="M428.60,990.00 L432.30,986.50 L436.00,990.00" fill="none" stroke="#6f7075" stroke-width="2" stroke-linecap="round" stroke-linejoin="round"/>
<path d="M789.10,986.50 L792.80,990.00 L796.50,986.50" fill="none" stroke="#6f7075" stroke-width="2" stroke-linecap="round" stroke-linejoin="round"/>
<path d="M1023.10,990.00 L1026.80,986.50 L1030.50,990.00" fill="none" stroke="#6f7075" stroke-width="2" stroke-linecap="round" stroke-linejoin="round"/>
<path d="M1257.10,990.00 L1260.80,986.50 L1264.50,990.00" fill="none" stroke="#6f7075" stroke-width="2" stroke-linecap="round" stroke-linejoin="round"/>
<path d="M1491.10,990.00 L1494.80,986.50 L1498.50,990.00" fill="none" stroke="#6f7075" stroke-width="2" stroke-linecap="round" stroke-linejoin="round"/>
<path d="M1725.60,990.00 L1729.30,986.50 L1733.00,990.00" fill="none" stroke="#6f7075" stroke-width="2" stroke-linecap="round" stroke-linejoin="round"/>
<rect x="45" y="940.4" width="1" height="449.6" fill="#fff"/>
</svg>
<div class="c" style="left:188px;width:487px;top:954px;font-size:16px;color:#76777b"><span style="text-decoration:underline;text-underline-offset:2px">Page URL</span> / Page Name</div>
<div class="c" style="left:675px;width:234px;top:954px;font-size:16px;color:#76777b">Page Views</div>
<div class="c" style="left:909px;width:234px;top:954px;font-size:16px;color:#76777b">Unique Page Views</div>
<div class="c" style="left:1143px;width:234px;top:954px;font-size:16px;color:#76777b">Avg. Time on Page</div>
<div class="c" style="left:1377px;width:234px;top:954px;font-size:16px;color:#76777b">Bounce Rate</div>
<div class="c" style="left:1611px;width:235px;top:954px;font-size:16px;color:#76777b">Exit</div>
<div class="c" style="left:675px;width:234px;top:1022px;font-size:18.5px;color:#6a6b6f">752</div>
<div class="c" style="left:909px;width:234px;top:1022px;font-size:18.5px;color:#6a6b6f">623</div>
<div class="c" style="left:1143px;width:234px;top:1022px;font-size:18.5px;color:#6a6b6f">00:01:06</div>
<div class="c" style="left:1377px;width:234px;top:1022px;font-size:18.5px;color:#6a6b6f">57.86%</div>
<div class="c" style="left:1611px;width:235px;top:1022px;font-size:18.5px;color:#6a6b6f">47.61%</div>
<div class="c" style="left:44px;width:144px;top:1075.9px;font-size:16.5px;color:#6c6d71">1</div>
<div class="c" style="left:188px;width:487px;top:1073.9px;font-size:17.5px;color:#6c6d71">/</div>
<div class="c" style="left:675px;width:234px;top:1075.9px;font-size:16.5px;color:#6c6d71">313</div>
<div class="c" style="left:909px;width:234px;top:1075.9px;font-size:16.5px;color:#6c6d71">252</div>
<div class="c" style="left:1143px;width:234px;top:1075.9px;font-size:16.5px;color:#6c6d71">00:01:00</div>
<div class="c" style="left:1377px;width:234px;top:1075.9px;font-size:16.5px;color:#6c6d71">51.85%</div>
<div class="c" style="left:1611px;width:235px;top:1075.9px;font-size:16.5px;color:#6c6d71">53.67%</div>
<svg width="16" height="14" viewBox="0 0 16 14" style="position:absolute;left:649px;top:1078.4px"><path d="M8,2 H3.2 Q1.15,2 1.15,4 V9.9 Q1.15,11.9 3.2,11.9 H9 Q11,11.9 11,9.9 V7.6" fill="none" stroke="#a6a7ab" stroke-width="1.25"/><path d="M6.6,8.3 L12.2,2.7" stroke="#a3a4a8" stroke-width="1.7"/><path d="M9.6,0.6 H14.3 V5.4 Z" fill="#a3a4a8"/></svg>
<div class="c" style="left:44px;width:144px;top:1122.0px;font-size:16.5px;color:#6c6d71">2</div>
<div class="c" style="left:188px;width:487px;top:1120.0px;font-size:17.5px;color:#6c6d71">contact</div>
<div class="c" style="left:675px;width:234px;top:1122.0px;font-size:16.5px;color:#6c6d71">65</div>
<div class="c" style="left:909px;width:234px;top:1122.0px;font-size:16.5px;color:#6c6d71">48</div>
<div class="c" style="left:1143px;width:234px;top:1122.0px;font-size:16.5px;color:#6c6d71">00:00:23</div>
<div class="c" style="left:1377px;width:234px;top:1122.0px;font-size:16.5px;color:#6c6d71">71.43%</div>
<div class="c" style="left:1611px;width:235px;top:1122.0px;font-size:16.5px;color:#6c6d71">38.46%</div>
<svg width="16" height="14" viewBox="0 0 16 14" style="position:absolute;left:649px;top:1124.5px"><path d="M8,2 H3.2 Q1.15,2 1.15,4 V9.9 Q1.15,11.9 3.2,11.9 H9 Q11,11.9 11,9.9 V7.6" fill="none" stroke="#a6a7ab" stroke-width="1.25"/><path d="M6.6,8.3 L12.2,2.7" stroke="#a3a4a8" stroke-width="1.7"/><path d="M9.6,0.6 H14.3 V5.4 Z" fill="#a3a4a8"/></svg>
<div class="c" style="left:44px;width:144px;top:1167.0px;font-size:16.5px;color:#6c6d71">3</div>
<div class="c" style="left:188px;width:487px;top:1165.0px;font-size:17.5px;color:#6c6d71">home-security</div>
<div class="c" style="left:675px;width:234px;top:1167.0px;font-size:16.5px;color:#6c6d71">46</div>
<div class="c" style="left:909px;width:234px;top:1167.0px;font-size:16.5px;color:#6c6d71">37</div>
<div class="c" style="left:1143px;width:234px;top:1167.0px;font-size:16.5px;color:#6c6d71">00:00:58</div>
<div class="c" style="left:1377px;width:234px;top:1167.0px;font-size:16.5px;color:#6c6d71">33.33%</div>
<div class="c" style="left:1611px;width:235px;top:1167.0px;font-size:16.5px;color:#6c6d71">23.91%</div>
<svg width="16" height="14" viewBox="0 0 16 14" style="position:absolute;left:649px;top:1169.5px"><path d="M8,2 H3.2 Q1.15,2 1.15,4 V9.9 Q1.15,11.9 3.2,11.9 H9 Q11,11.9 11,9.9 V7.6" fill="none" stroke="#a6a7ab" stroke-width="1.25"/><path d="M6.6,8.3 L12.2,2.7" stroke="#a3a4a8" stroke-width="1.7"/><path d="M9.6,0.6 H14.3 V5.4 Z" fill="#a3a4a8"/></svg>
<div class="c" style="left:44px;width:144px;top:1212.2px;font-size:16.5px;color:#6c6d71">4</div>
<div class="c" style="left:188px;width:487px;top:1210.2px;font-size:17.5px;color:#6c6d71">aboutus</div>
<div class="c" style="left:675px;width:234px;top:1212.2px;font-size:16.5px;color:#6c6d71">43</div>
<div class="c" style="left:909px;width:234px;top:1212.2px;font-size:16.5px;color:#6c6d71">36</div>
<div class="c" style="left:1143px;width:234px;top:1212.2px;font-size:16.5px;color:#6c6d71">00:04:31</div>
<div class="c" style="left:1377px;width:234px;top:1212.2px;font-size:16.5px;color:#6c6d71">50%</div>
<div class="c" style="left:1611px;width:235px;top:1212.2px;font-size:16.5px;color:#6c6d71">53.49%</div>
<div class="c" style="left:44px;width:144px;top:1257.7px;font-size:16.5px;color:#6c6d71">5</div>
<div class="c" style="left:188px;width:487px;top:1255.7px;font-size:17.5px;color:#6c6d71">residential-security</div>
<div class="c" style="left:675px;width:234px;top:1257.7px;font-size:16.5px;color:#6c6d71">34</div>
<div class="c" style="left:909px;width:234px;top:1257.7px;font-size:16.5px;color:#6c6d71">28</div>
<div class="c" style="left:1143px;width:234px;top:1257.7px;font-size:16.5px;color:#6c6d71">00:00:18</div>
<div class="c" style="left:1377px;width:234px;top:1257.7px;font-size:16.5px;color:#6c6d71">80%</div>
<div class="c" style="left:1611px;width:235px;top:1257.7px;font-size:16.5px;color:#6c6d71">26.47%</div>
<svg width="16" height="14" viewBox="0 0 16 14" style="position:absolute;left:649px;top:1260.2px"><path d="M8,2 H3.2 Q1.15,2 1.15,4 V9.9 Q1.15,11.9 3.2,11.9 H9 Q11,11.9 11,9.9 V7.6" fill="none" stroke="#a6a7ab" stroke-width="1.25"/><path d="M6.6,8.3 L12.2,2.7" stroke="#a3a4a8" stroke-width="1.7"/><path d="M9.6,0.6 H14.3 V5.4 Z" fill="#a3a4a8"/></svg>
<div class="c" style="left:44px;width:144px;top:1303.0px;font-size:16.5px;color:#6c6d71">6</div>
<div class="c" style="left:188px;width:487px;top:1301.0px;font-size:17.5px;color:#6c6d71">video-surveillance</div>
<div class="c" style="left:675px;width:234px;top:1303.0px;font-size:16.5px;color:#6c6d71">30</div>
<div class="c" style="left:909px;width:234px;top:1303.0px;font-size:16.5px;color:#6c6d71">26</div>
<div class="c" style="left:1143px;width:234px;top:1303.0px;font-size:16.5px;color:#6c6d71">00:01:02</div>
<div class="c" style="left:1377px;width:234px;top:1303.0px;font-size:16.5px;color:#6c6d71">100%</div>
<div class="c" style="left:1611px;width:235px;top:1303.0px;font-size:16.5px;color:#6c6d71">43.33%</div>
<svg width="16" height="14" viewBox="0 0 16 14" style="position:absolute;left:649px;top:1305.5px"><path d="M8,2 H3.2 Q1.15,2 1.15,4 V9.9 Q1.15,11.9 3.2,11.9 H9 Q11,11.9 11,9.9 V7.6" fill="none" stroke="#a6a7ab" stroke-width="1.25"/><path d="M6.6,8.3 L12.2,2.7" stroke="#a3a4a8" stroke-width="1.7"/><path d="M9.6,0.6 H14.3 V5.4 Z" fill="#a3a4a8"/></svg>
<div class="c" style="left:44px;width:144px;top:1348.2px;font-size:16.5px;color:#6c6d71">7</div>
<div class="c" style="left:188px;width:487px;top:1346.2px;font-size:17.5px;color:#6c6d71">consultation-request</div>
<div class="c" style="left:675px;width:234px;top:1348.2px;font-size:16.5px;color:#6c6d71">23</div>
<div class="c" style="left:909px;width:234px;top:1348.2px;font-size:16.5px;color:#6c6d71">18</div>
<div class="c" style="left:1143px;width:234px;top:1348.2px;font-size:16.5px;color:#6c6d71">00:00:32</div>
<div class="c" style="left:1377px;width:234px;top:1348.2px;font-size:16.5px;color:#6c6d71">60%</div>
<div class="c" style="left:1611px;width:235px;top:1348.2px;font-size:16.5px;color:#6c6d71">52.17%</div>
<svg width="16" height="14" viewBox="0 0 16 14" style="position:absolute;left:649px;top:1350.8px"><path d="M8,2 H3.2 Q1.15,2 1.15,4 V9.9 Q1.15,11.9 3.2,11.9 H9 Q11,11.9 11,9.9 V7.6" fill="none" stroke="#a6a7ab" stroke-width="1.25"/><path d="M6.6,8.3 L12.2,2.7" stroke="#a3a4a8" stroke-width="1.7"/><path d="M9.6,0.6 H14.3 V5.4 Z" fill="#a3a4a8"/></svg>
</body></html>
